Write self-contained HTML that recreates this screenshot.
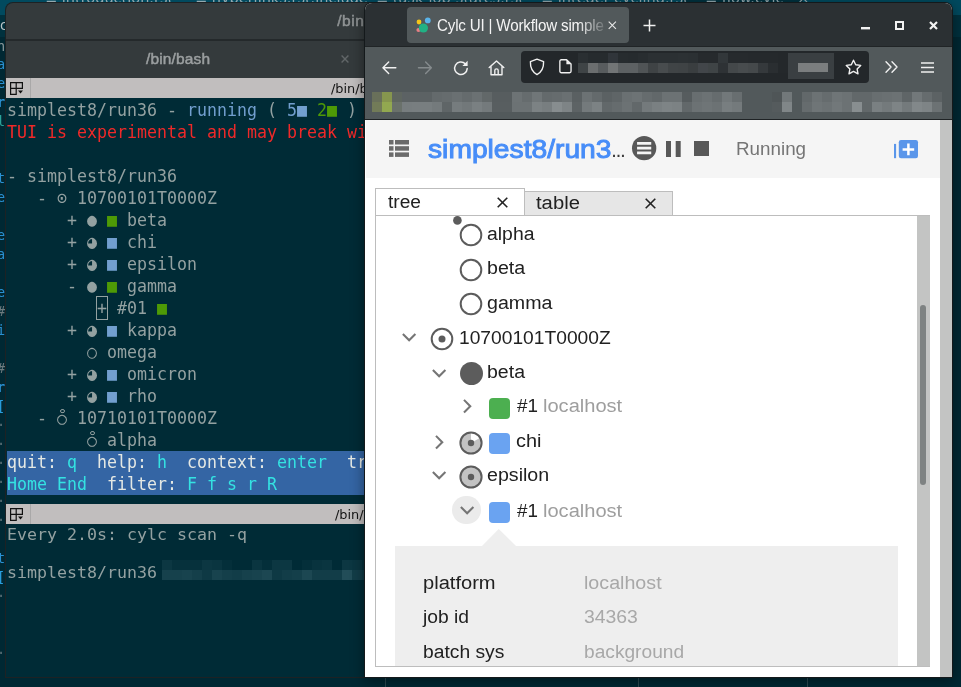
<!DOCTYPE html>
<html lang="en">
<head>
<meta charset="utf-8">
<title>Cylc UI | Workflow simplest8/run36</title>
<style>
html,body{margin:0;padding:0;}
body{width:961px;height:687px;overflow:hidden;position:relative;background:#00252f;font-family:"Liberation Sans","DejaVu Sans",sans-serif;}
.abs{position:absolute;}
#term,#ff,#desk{will-change:transform;}
/* ---------- desktop / editor behind ---------- */
#desk{left:0;top:0;width:961px;height:687px;background:#002b36;overflow:hidden;}
#desk .tabs{left:0;top:0;width:961px;height:15px;background:linear-gradient(90deg,#014a5f 0,#014a5f 100%);}
#desk .tabtxt{top:-10px;font:14.5px/16px "DejaVu Sans","Liberation Sans",sans-serif;color:#93a9b0;white-space:pre;}
#desk .gut{font:13.5px/18px "DejaVu Sans Mono","Liberation Mono",monospace;color:#2f8fd0;white-space:pre;}
/* ---------- terminal window ---------- */
#term{left:6px;top:3px;width:380px;height:674px;background:#002b36;border-radius:7px 0 0 0;overflow:hidden;box-shadow:0 0 0 1px #1d2224;}
#term .title{left:0;top:0;width:380px;height:36px;background:#343a3c;}
#term .sep{left:0;top:36px;width:380px;height:2px;background:#24292b;}
#term .tabbar{left:0;top:38px;width:380px;height:37px;background:#343a3c;}
.gtkb{font:15.5px/20px "Liberation Sans","DejaVu Sans",sans-serif;color:#8f9394;white-space:pre;letter-spacing:0.15px;-webkit-text-stroke:0.5px currentColor;}
.ttl{background:#c1bebe;height:20px;width:380px;left:0;}
.ttl .lbl{font:12.9px/20px "DejaVu Sans","Liberation Sans",sans-serif;color:#141414;white-space:pre;top:0.5px;}
.ttl .ico{left:0;top:0;width:24px;height:20px;border-right:1px solid #a9a8a8;}
.mono{font:16.61px/22px "DejaVu Sans Mono","Liberation Mono",monospace;color:#93a1a1;white-space:pre;left:1px;height:22px;}
.tall{transform:scaleY(1.09);transform-origin:0 16.9px;}
.b{color:#729fcf}.g{color:#4e9a06}.r{color:#ef2929}.c{color:#34e2e2}.w{color:#e4e8e4}
.ra{position:relative;display:inline-block;transform:scaleY(0.917);transform-origin:50% 18px;}
.ra::after{content:"";position:absolute;left:2.65px;top:0.5px;width:2.9px;height:2.9px;border:0.95px solid #93a1a1;border-radius:50%;}
.sq{display:inline-block;width:10px;height:10px;vertical-align:-1px;}

/* ---------- browser ---------- */
#ff{left:365px;top:3px;width:587px;height:674px;background:#fff;border-radius:7px 7px 0 0;overflow:hidden;box-shadow:0 0 0 1px #14191b,0 3px 14px 1px rgba(0,0,0,0.42);}
#ff .tabbar{left:0;top:0;width:587px;height:43px;background:#2b3033;}
#ff .line1{left:0;top:43px;width:587px;height:1px;background:#202426;}
#ff .tool{left:0;top:44px;width:587px;height:72px;background:#52595b;}
#ff .line2{left:0;top:116px;width:587px;height:1px;background:#1f2325;}
#ff .tab{left:42px;top:4px;width:221.5px;height:35.5px;border-radius:4px;background:#52595b;}
#ff .tabtitle{left:71.5px;top:11.3px;width:178px;height:22px;overflow:hidden;font:16.2px/22px "Liberation Sans","DejaVu Sans",sans-serif;color:#f4f4f4;white-space:pre;letter-spacing:-0.2px;transform:scaleX(0.937);transform-origin:0 50%;}
#ff .url{left:156px;top:48px;width:348px;height:32px;border-radius:4px;background:#23272a;}
svg{position:absolute;overflow:visible;}
.px{position:absolute;width:10px;height:10px;}
/* page */
#page{left:1px;top:117px;width:574px;height:557px;background:#fff;overflow:hidden;font-family:"Liberation Sans",sans-serif;}
#page .hdr{left:0;top:0;width:574px;height:58px;background:#f5f5f5;}
#page .wtitle{font:25.4px/36px "Liberation Sans",sans-serif;color:#478df8;white-space:pre;transform-origin:0 50%;-webkit-text-stroke:0.95px #478df8;}
#page .status{font:17.5px/24px "Liberation Sans",sans-serif;color:#757575;white-space:pre;transform-origin:0 50%;}
#vsb{left:575px;top:117px;width:12px;height:557px;background:#c3c4c3;}
.tabbtn{border:1px solid #bdbdbd;box-sizing:border-box;font:18px/26px "Liberation Sans",sans-serif;color:#222;white-space:pre;}
#panel{left:9px;top:95px;width:555px;height:452px;border:1px solid #bdbdbd;box-sizing:border-box;background:#fff;}
.t{position:absolute;font:18px/24px "Liberation Sans",sans-serif;color:#212121;white-space:pre;transform-origin:0 50%;}
.t.h{color:#9e9e9e;}
.t.v{color:#a8a8a8;}
.sqr{position:absolute;width:21px;height:21px;border-radius:4px;}
</style>
</head>
<body>
<div id="desk" class="abs">
  <div class="abs tabs"></div>
  <div class="abs" style="left:683px;top:0;width:120px;height:15px;background:#00323f;"></div>
  <div class="abs tabtxt" style="left:45px;">≡ introduction.rst</div>
  <div class="abs tabtxt" style="left:195px;">≡ hyperlinks.rst.include</div>
  <div class="abs tabtxt" style="left:376px;">≡ task-job-states.rst</div>
  <div class="abs tabtxt" style="left:541px;">≡ integer-cycling.rst</div>
  <div class="abs tabtxt" style="left:705px;">≡ flow.cylc   ×</div>
  <div class="abs" style="left:0;top:15px;width:961px;height:22px;background:#00313e;"></div>
  <div class="abs" style="left:0;top:37px;width:961px;height:650px;background:#002833;"></div>
  <div class="abs gut" style="left:-3px;top:54.5px;color:#2a8fd0">a</div>
  <div class="abs gut" style="left:-3px;top:73.5px;color:#2a8fd0">e</div>
  <div class="abs gut" style="left:-3px;top:92.5px;color:#2a8fd0;font-weight:bold">r</div>
  <div class="abs gut" style="left:-3px;top:111.5px;color:#2aa198">l</div>
  <div class="abs gut" style="left:-3px;top:168.5px;color:#2a8fd0">t</div>
  <div class="abs gut" style="left:-3px;top:187.5px;color:#2a8fd0">e</div>
  <div class="abs gut" style="left:-3px;top:225.5px;color:#2a8fd0">e</div>
  <div class="abs gut" style="left:-3px;top:244.5px;color:#2a8fd0">a</div>
  <div class="abs gut" style="left:-3px;top:282.5px;color:#2a8fd0">e</div>
  <div class="abs gut" style="left:-3px;top:301.5px;color:#6c7a7e">#</div>
  <div class="abs gut" style="left:-3px;top:320.5px;color:#2a8fd0">i</div>
  <div class="abs gut" style="left:-3px;top:358.5px;color:#6c7a7e">#</div>
  <div class="abs gut" style="left:-3px;top:377.5px;color:#2a8fd0;font-weight:bold">r</div>
  <div class="abs gut" style="left:-3px;top:396.5px;color:#2aa0e0">[</div>
  <div class="abs gut" style="left:-3px;top:415.5px;color:#586e75">·</div>
  <div class="abs gut" style="left:-3px;top:434.5px;color:#586e75">·</div>
  <div class="abs gut" style="left:-3px;top:453.5px;color:#586e75">·</div>
  <div class="abs gut" style="left:-3px;top:472.5px;color:#586e75">·</div>
  <div class="abs gut" style="left:-3px;top:491.5px;color:#586e75">·</div>
  <div class="abs gut" style="left:-3px;top:510.5px;color:#586e75">·</div>
  <div class="abs gut" style="left:-3px;top:548.5px;color:#2a8fd0">t</div>
  <div class="abs gut" style="left:-3px;top:567.5px;color:#2aa0e0">[</div>
  <div class="abs gut" style="left:-3px;top:586.5px;color:#586e75">·</div>
  <div class="abs gut" style="left:-3px;top:643.5px;color:#586e75">·</div>
  <div class="abs gut" style="left:-0.5px;top:15.5px;color:#b8c4c6;">c</div>
  <div class="abs gut" style="left:-3px;top:36.5px;color:#8a999c;">n</div>
  <div class="abs" style="left:385px;top:677px;width:1px;height:10px;background:#2c4a52;"></div>
  <div class="abs" style="left:638px;top:677px;width:1px;height:10px;background:#2c4a52;"></div>
  <div class="abs" style="left:807px;top:677px;width:1px;height:10px;background:#2c4a52;"></div>
</div>

<!-- ================= TERMINAL ================= -->
<div id="term" class="abs">
  <div class="abs title"></div>
  <div class="abs sep"></div>
  <div class="abs tabbar"></div>
  <div class="abs gtkb" style="left:331.3px;top:8px;letter-spacing:0.5px;">/bin/bash</div>
  <div class="abs gtkb" style="left:140px;top:46px;color:#9b9fa0;">/bin/bash</div>
  <svg style="left:335px;top:52px" width="8" height="8" viewBox="0 0 8 8"><path d="M0.6 0.6L7.4 7.4M7.4 0.6L0.6 7.4" stroke="#616668" stroke-width="1.4" fill="none"/></svg>
  <div class="px" style="left:156px;top:557px;background:rgb(12,55,66);"></div><div class="px" style="left:156px;top:567px;background:rgb(22,65,76);"></div><div class="px" style="left:166px;top:557px;background:rgb(6,49,60);"></div><div class="px" style="left:166px;top:567px;background:rgb(22,65,76);"></div><div class="px" style="left:176px;top:557px;background:rgb(6,49,60);"></div><div class="px" style="left:176px;top:567px;background:rgb(24,67,78);"></div><div class="px" style="left:186px;top:557px;background:rgb(6,49,60);"></div><div class="px" style="left:186px;top:567px;background:rgb(20,63,74);"></div><div class="px" style="left:196px;top:557px;background:rgb(12,55,66);"></div><div class="px" style="left:196px;top:567px;background:rgb(14,57,68);"></div><div class="px" style="left:206px;top:557px;background:rgb(10,53,64);"></div><div class="px" style="left:206px;top:567px;background:rgb(24,67,78);"></div><div class="px" style="left:216px;top:557px;background:rgb(4,47,58);"></div><div class="px" style="left:216px;top:567px;background:rgb(20,63,74);"></div><div class="px" style="left:226px;top:557px;background:rgb(0,43,54);"></div><div class="px" style="left:226px;top:567px;background:rgb(18,61,72);"></div><div class="px" style="left:236px;top:557px;background:rgb(0,43,54);"></div><div class="px" style="left:236px;top:567px;background:rgb(22,65,76);"></div><div class="px" style="left:246px;top:557px;background:rgb(10,53,64);"></div><div class="px" style="left:246px;top:567px;background:rgb(24,67,78);"></div><div class="px" style="left:256px;top:557px;background:rgb(4,47,58);"></div><div class="px" style="left:256px;top:567px;background:rgb(28,71,82);"></div><div class="px" style="left:266px;top:557px;background:rgb(12,55,66);"></div><div class="px" style="left:266px;top:567px;background:rgb(14,57,68);"></div><div class="px" style="left:276px;top:557px;background:rgb(12,55,66);"></div><div class="px" style="left:276px;top:567px;background:rgb(18,61,72);"></div><div class="px" style="left:286px;top:557px;background:rgb(0,43,54);"></div><div class="px" style="left:286px;top:567px;background:rgb(20,63,74);"></div><div class="px" style="left:296px;top:557px;background:rgb(4,47,58);"></div><div class="px" style="left:296px;top:567px;background:rgb(28,71,82);"></div><div class="px" style="left:306px;top:557px;background:rgb(8,51,62);"></div><div class="px" style="left:306px;top:567px;background:rgb(18,61,72);"></div><div class="px" style="left:316px;top:557px;background:rgb(10,53,64);"></div><div class="px" style="left:316px;top:567px;background:rgb(18,61,72);"></div><div class="px" style="left:326px;top:557px;background:rgb(0,43,54);"></div><div class="px" style="left:326px;top:567px;background:rgb(18,61,72);"></div><div class="px" style="left:336px;top:557px;background:rgb(12,55,66);"></div><div class="px" style="left:336px;top:567px;background:rgb(34,77,88);"></div><div class="px" style="left:346px;top:557px;background:rgb(10,53,64);"></div><div class="px" style="left:346px;top:567px;background:rgb(18,61,72);"></div><div class="px" style="left:356px;top:557px;background:rgb(4,47,58);"></div><div class="px" style="left:356px;top:567px;background:rgb(14,57,68);"></div>
  <div class="abs" style="left:90px;top:293px;width:12px;height:23.5px;box-sizing:border-box;border:1px solid #93a1a1;"></div>
  <div class="abs ttl" style="top:75px;"><div class="abs ico"><svg style="left:4px;top:4px" width="14" height="13" viewBox="0 0 14 13"><path d="M0.6 0.6H12.4V6.3H0.6ZM0.6 6.3V12.4H6.2V0.6" stroke="#111" stroke-width="1.2" fill="none"/><path d="M8 8.6H13L10.5 11.4Z" fill="#111"/></svg></div><div class="abs lbl" style="left:325px;">/bin/bash</div></div>
  <div class="abs ttl" style="top:501px;"><div class="abs ico"><svg style="left:4px;top:4px" width="14" height="13" viewBox="0 0 14 13"><path d="M0.6 0.6H12.4V6.3H0.6ZM0.6 6.3V12.4H6.2V0.6" stroke="#111" stroke-width="1.2" fill="none"/><path d="M8 8.6H13L10.5 11.4Z" fill="#111"/></svg></div><div class="abs lbl" style="left:329px;">/bin/bash</div></div>
  <div class="abs mono tall" style="top:97px;"><span>simplest8/run36 - </span><span class="b">running</span> ( <span class="b">5■</span> <span class="g">2■</span> )</div>
  <div class="abs mono tall" style="top:119px;"><span class="r">TUI is experimental and may break with</span></div>
  <div class="abs mono tall" style="top:163px;">- simplest8/run36</div>
  <div class="abs mono tall" style="top:185px;">   - ⊙ 10700101T0000Z</div>
  <div class="abs mono tall" style="top:207px;">      + ● <span class="g">■</span> beta</div>
  <div class="abs mono tall" style="top:229px;">      + ◕ <span class="b">■</span> chi</div>
  <div class="abs mono tall" style="top:251px;">      + ◕ <span class="b">■</span> epsilon</div>
  <div class="abs mono tall" style="top:273px;">      - ● <span class="g">■</span> gamma</div>
  <div class="abs mono tall" style="top:295px;">         <span class="cur">+</span> #01 <span class="g">■</span></div>
  <div class="abs mono tall" style="top:317px;">      + ◕ <span class="b">■</span> kappa</div>
  <div class="abs mono tall" style="top:339px;">        ○ omega</div>
  <div class="abs mono tall" style="top:361px;">      + ◕ <span class="b">■</span> omicron</div>
  <div class="abs mono tall" style="top:383px;">      + ◕ <span class="b">■</span> rho</div>
  <div class="abs mono tall" style="top:405px;">   - <span class="ra">○</span> 10710101T0000Z</div>
  <div class="abs mono tall" style="top:427px;">        <span class="ra">○</span> alpha</div>
  <div class="abs" style="left:1px;top:448px;width:378px;height:44px;background:#3465a4;"></div>
  <div class="abs mono tall w" style="top:449px;">quit: <span class="c">q</span>  help: <span class="c">h</span>  context: <span class="c">enter</span>  tree: </div>
  <div class="abs mono tall w" style="top:471px;"><span class="c">Home End</span>  filter: <span class="c">F f s r R</span></div>
  <div class="abs mono" style="top:522px;line-height:19.5px;">Every 2.0s: cylc scan -q</div>
  <div class="abs mono" style="top:560.3px;line-height:19.5px;">simplest8/run36</div>
</div>

<!-- ================= BROWSER ================= -->
<div id="ff" class="abs">
<div class="abs tabbar"></div><div class="abs line1"></div><div class="abs tool"></div><div class="abs line2"></div>
<div class="abs tab"></div>
<svg style="left:50px;top:12px" width="20" height="20" viewBox="0 0 20 20"><circle cx="4" cy="7" r="2.4" fill="#f5c518"/><circle cx="12.8" cy="5.4" r="2.9" fill="#5ab4ea"/><circle cx="3.5" cy="15" r="2.1" fill="#e87d84"/><circle cx="8.4" cy="13" r="4.6" fill="#21b184"/></svg>
<div class="abs tabtitle">Cylc UI | Workflow simplest8/run36</div>
<div class="abs" style="left:213px;top:8px;width:27px;height:28px;background:linear-gradient(90deg,rgba(82,89,91,0),rgba(82,89,91,0.85));"></div>
<svg style="left:242.5px;top:18px" width="8.6" height="8.6" viewBox="0 0 10 10"><path d="M0.8 0.8L9.2 9.2M9.2 0.8L0.8 9.2" stroke="#e8e8e8" stroke-width="1.3" fill="none"/></svg>
<svg style="left:278px;top:16px" width="13" height="13" viewBox="0 0 13 13"><path d="M6.5 0.5V12.5M0.5 6.5H12.5" stroke="#f0f0f0" stroke-width="1.5" fill="none"/></svg>
<svg style="left:496px;top:23.6px" width="9" height="3" viewBox="0 0 9 3"><rect x="0" y="0" width="9" height="2.4" fill="#f2f2f2"/></svg>
<svg style="left:530px;top:18px" width="9" height="9" viewBox="0 0 9 9"><rect x="1" y="1" width="7" height="7" stroke="#f2f2f2" stroke-width="2" fill="none"/></svg>
<svg style="left:564.3px;top:18px" width="9" height="9" viewBox="0 0 9 9"><path d="M1 1L8 8M8 1L1 8" stroke="#f2f2f2" stroke-width="2.2" fill="none"/></svg>
<svg style="left:17px;top:57.7px" width="14.3" height="13.4" viewBox="0 0 15 14"><path d="M14.5 7H1.2M7 1L1 7L7 13" stroke="#f0f0f0" stroke-width="1.5" fill="none" stroke-linecap="round" stroke-linejoin="round"/></svg>
<svg style="left:53.3px;top:57.7px" width="14.3" height="13.4" viewBox="0 0 15 14"><path d="M0.5 7H13.8M8 1L14 7L8 13" stroke="#858b8d" stroke-width="1.5" fill="none" stroke-linecap="round" stroke-linejoin="round"/></svg>
<svg style="left:88px;top:56.5px" width="16" height="16" viewBox="0 0 16 16"><path d="M14.2 8.6A6.3 6.3 0 1 1 12.3 3.7" stroke="#f0f0f0" stroke-width="1.5" fill="none" stroke-linecap="round"/><path d="M14.6 0.8V6H9.4Z" fill="#f0f0f0"/></svg>
<svg style="left:123px;top:56.5px" width="17" height="16" viewBox="0 0 17 16"><path d="M1.2 7.6L8.5 1L15.8 7.6M3 6.2V14.8H14V6.2M6.8 14.8V10.6a1.7 1.7 0 0 1 3.4 0V14.8" stroke="#f0f0f0" stroke-width="1.4" fill="none" stroke-linecap="round" stroke-linejoin="round"/></svg>
<div class="px" style="left:7px;top:89px;background:#69705a;"></div><div class="px" style="left:7px;top:99px;background:#727b58;"></div><div class="px" style="left:17px;top:89px;background:#86964e;"></div><div class="px" style="left:17px;top:99px;background:#92a850;"></div><div class="px" style="left:27px;top:89px;background:#5f6660;"></div><div class="px" style="left:27px;top:99px;background:#6a716b;"></div><div class="px" style="left:37px;top:89px;background:#5c6264;"></div><div class="px" style="left:37px;top:99px;background:#777d7f;"></div><div class="px" style="left:47px;top:89px;background:#5c6264;"></div><div class="px" style="left:47px;top:99px;background:#787e80;"></div><div class="px" style="left:57px;top:89px;background:#5c6264;"></div><div class="px" style="left:57px;top:99px;background:#787e80;"></div><div class="px" style="left:67px;top:89px;background:#646a6c;"></div><div class="px" style="left:67px;top:99px;background:#747a7c;"></div><div class="px" style="left:77px;top:89px;background:#666c6e;"></div><div class="px" style="left:77px;top:99px;background:#5f6567;"></div><div class="px" style="left:87px;top:89px;background:#6a7072;"></div><div class="px" style="left:87px;top:99px;background:#767c7e;"></div><div class="px" style="left:97px;top:89px;background:#656b6d;"></div><div class="px" style="left:97px;top:99px;background:#72787a;"></div><div class="px" style="left:107px;top:89px;background:#6b7173;"></div><div class="px" style="left:107px;top:99px;background:#7a8082;"></div><div class="px" style="left:117px;top:89px;background:#626869;"></div><div class="px" style="left:117px;top:99px;background:#747a7c;"></div><div class="px" style="left:127px;top:89px;background:#575d5f;"></div><div class="px" style="left:127px;top:99px;background:#585e60;"></div><div class="px" style="left:137px;top:89px;background:#575d5f;"></div><div class="px" style="left:137px;top:99px;background:#585e60;"></div><div class="px" style="left:147px;top:89px;background:#6d7375;"></div><div class="px" style="left:147px;top:99px;background:#6c7274;"></div><div class="px" style="left:157px;top:89px;background:#666c6e;"></div><div class="px" style="left:157px;top:99px;background:#6c7274;"></div><div class="px" style="left:167px;top:89px;background:#707678;"></div><div class="px" style="left:167px;top:99px;background:#7c8284;"></div><div class="px" style="left:177px;top:89px;background:#646a6c;"></div><div class="px" style="left:177px;top:99px;background:#787e80;"></div><div class="px" style="left:187px;top:89px;background:#666c6e;"></div><div class="px" style="left:187px;top:99px;background:#878d8f;"></div><div class="px" style="left:197px;top:89px;background:#6a7072;"></div><div class="px" style="left:197px;top:99px;background:#7e8486;"></div><div class="px" style="left:207px;top:89px;background:#5a6062;"></div><div class="px" style="left:207px;top:99px;background:#5d6365;"></div><div class="px" style="left:217px;top:89px;background:#6c7274;"></div><div class="px" style="left:217px;top:99px;background:#747a7c;"></div><div class="px" style="left:227px;top:89px;background:#646a6c;"></div><div class="px" style="left:227px;top:99px;background:#7c8284;"></div><div class="px" style="left:237px;top:89px;background:#5b6163;"></div><div class="px" style="left:237px;top:99px;background:#62686a;"></div><div class="px" style="left:247px;top:89px;background:#5f6567;"></div><div class="px" style="left:247px;top:99px;background:#666c6e;"></div><div class="px" style="left:257px;top:89px;background:#6a7072;"></div><div class="px" style="left:257px;top:99px;background:#6c7274;"></div><div class="px" style="left:267px;top:89px;background:#6d7375;"></div><div class="px" style="left:267px;top:99px;background:#62686a;"></div><div class="px" style="left:277px;top:89px;background:#666c6e;"></div><div class="px" style="left:277px;top:99px;background:#747a7c;"></div><div class="px" style="left:287px;top:89px;background:#62686a;"></div><div class="px" style="left:287px;top:99px;background:#7a8082;"></div><div class="px" style="left:297px;top:89px;background:#6c7274;"></div><div class="px" style="left:297px;top:99px;background:#7e8486;"></div><div class="px" style="left:307px;top:89px;background:#6c7274;"></div><div class="px" style="left:307px;top:99px;background:#7c8284;"></div><div class="px" style="left:317px;top:89px;background:#565c5e;"></div><div class="px" style="left:317px;top:99px;background:#62686a;"></div><div class="px" style="left:327px;top:89px;background:#686e70;"></div><div class="px" style="left:327px;top:99px;background:#6c7274;"></div><div class="px" style="left:337px;top:89px;background:#6c7274;"></div><div class="px" style="left:337px;top:99px;background:#6f7577;"></div><div class="px" style="left:347px;top:89px;background:#666c6e;"></div><div class="px" style="left:347px;top:99px;background:#6c7274;"></div><div class="px" style="left:357px;top:89px;background:#72787a;"></div><div class="px" style="left:357px;top:99px;background:#787e80;"></div><div class="px" style="left:367px;top:89px;background:#686e70;"></div><div class="px" style="left:367px;top:99px;background:#747a7c;"></div><div class="px" style="left:407px;top:89px;background:#4f5557;"></div><div class="px" style="left:407px;top:99px;background:#555b5d;"></div><div class="px" style="left:417px;top:89px;background:#72787a;"></div><div class="px" style="left:417px;top:99px;background:#808688;"></div><div class="px" style="left:437px;top:89px;background:#62686a;"></div><div class="px" style="left:437px;top:99px;background:#666c6e;"></div><div class="px" style="left:447px;top:89px;background:#6c7274;"></div><div class="px" style="left:447px;top:99px;background:#6f7577;"></div><div class="px" style="left:457px;top:89px;background:#666c6e;"></div><div class="px" style="left:457px;top:99px;background:#6c7274;"></div><div class="px" style="left:467px;top:89px;background:#6f7577;"></div><div class="px" style="left:467px;top:99px;background:#72787a;"></div><div class="px" style="left:477px;top:89px;background:#6c7274;"></div><div class="px" style="left:477px;top:99px;background:#6c7274;"></div><div class="px" style="left:487px;top:89px;background:#62686a;"></div><div class="px" style="left:487px;top:99px;background:#888e90;"></div><div class="px" style="left:497px;top:89px;background:#62686a;"></div><div class="px" style="left:497px;top:99px;background:#62686a;"></div><div class="px" style="left:507px;top:89px;background:#686e70;"></div><div class="px" style="left:507px;top:99px;background:#7a8082;"></div><div class="px" style="left:517px;top:89px;background:#6a7072;"></div><div class="px" style="left:517px;top:99px;background:#747a7c;"></div><div class="px" style="left:527px;top:89px;background:#6c7274;"></div><div class="px" style="left:527px;top:99px;background:#7e8486;"></div><div class="px" style="left:537px;top:89px;background:#5f6567;"></div><div class="px" style="left:537px;top:99px;background:#747a7c;"></div><div class="px" style="left:547px;top:89px;background:#72787a;"></div><div class="px" style="left:547px;top:99px;background:#82888a;"></div><div class="px" style="left:557px;top:89px;background:#666c6e;"></div><div class="px" style="left:557px;top:99px;background:#7e8486;"></div><div class="px" style="left:567px;top:89px;background:#5c6264;"></div><div class="px" style="left:567px;top:99px;background:#6c7274;"></div>
<div class="abs url"></div>
<svg style="left:164px;top:55px" width="16" height="18" viewBox="0 0 16 18"><path d="M8 1.2L14.6 3.6C14.8 9.5 12.6 14.2 8 16.6C3.4 14.2 1.2 9.5 1.4 3.6Z" stroke="#f0f0f0" stroke-width="1.4" fill="none" stroke-linejoin="round"/></svg>
<svg style="left:193.7px;top:56.3px" width="13" height="14.6" viewBox="0 0 13 15"><path d="M2.2 0.8H7.6L12.2 5.2V12.6a1.5 1.5 0 0 1-1.5 1.5H2.2a1.5 1.5 0 0 1-1.5-1.5V2.3a1.5 1.5 0 0 1 1.5-1.5Z" stroke="#f0f0f0" stroke-width="1.4" fill="none" stroke-linejoin="round"/><path d="M7.4 0.8V5.4H12.2Z" fill="#f0f0f0"/></svg>
<svg style="left:480px;top:56px" width="17" height="16" viewBox="0 0 17 16"><path d="M8.5 1.2L10.7 5.7L15.7 6.4L12.1 9.9L13 14.8L8.5 12.4L4 14.8L4.9 9.9L1.3 6.4L6.3 5.7Z" stroke="#f0f0f0" stroke-width="1.4" fill="none" stroke-linejoin="round"/></svg>
<svg style="left:520px;top:58px" width="13" height="12" viewBox="0 0 13 12"><path d="M1 0.8L6 6L1 11.2M7 0.8L12 6L7 11.2" stroke="#f0f0f0" stroke-width="1.4" fill="none" stroke-linecap="round" stroke-linejoin="round"/></svg>
<svg style="left:556.3px;top:59px" width="13" height="11" viewBox="0 0 13 11"><path d="M0 1H13M0 5.5H13M0 10H13" stroke="#f0f0f0" stroke-width="1.4" fill="none"/></svg>
<div class="px" style="left:213px;top:50px;background:#2a2f32;"></div><div class="px" style="left:213px;top:60px;background:#3f4446;"></div><div class="px" style="left:223px;top:50px;background:#262b2e;"></div><div class="px" style="left:223px;top:60px;background:#6b6e6f;"></div><div class="px" style="left:233px;top:50px;background:#262b2e;"></div><div class="px" style="left:233px;top:60px;background:#585c5e;"></div><div class="px" style="left:243px;top:50px;background:#30353a;"></div><div class="px" style="left:243px;top:60px;background:#727576;"></div><div class="px" style="left:253px;top:50px;background:#272c2f;"></div><div class="px" style="left:253px;top:60px;background:#5d6163;"></div><div class="px" style="left:263px;top:50px;background:#262b2e;"></div><div class="px" style="left:263px;top:60px;background:#5d6163;"></div><div class="px" style="left:273px;top:50px;background:#282d30;"></div><div class="px" style="left:273px;top:60px;background:#505456;"></div><div class="px" style="left:283px;top:50px;background:#2b3033;"></div><div class="px" style="left:283px;top:60px;background:#3f4345;"></div><div class="px" style="left:293px;top:50px;background:#2b3033;"></div><div class="px" style="left:293px;top:60px;background:#484c4e;"></div><div class="px" style="left:303px;top:50px;background:#2b3033;"></div><div class="px" style="left:303px;top:60px;background:#404446;"></div><div class="px" style="left:313px;top:50px;background:#2c3134;"></div><div class="px" style="left:313px;top:60px;background:#3f4345;"></div><div class="px" style="left:323px;top:50px;background:#2b3033;"></div><div class="px" style="left:323px;top:60px;background:#3a3e40;"></div><div class="px" style="left:333px;top:50px;background:#262a2d;"></div><div class="px" style="left:333px;top:60px;background:#42464a;"></div><div class="px" style="left:343px;top:50px;background:#262a2d;"></div><div class="px" style="left:343px;top:60px;background:#3f4446;"></div><div class="px" style="left:353px;top:50px;background:#32373a;"></div><div class="px" style="left:353px;top:60px;background:#2e3235;"></div><div class="px" style="left:363px;top:50px;background:#262a2d;"></div><div class="px" style="left:363px;top:60px;background:#44484a;"></div><div class="px" style="left:373px;top:50px;background:#262a2d;"></div><div class="px" style="left:373px;top:60px;background:#484c4e;"></div><div class="px" style="left:383px;top:50px;background:#25292c;"></div><div class="px" style="left:383px;top:60px;background:#45494b;"></div><div class="px" style="left:393px;top:50px;background:#25292c;"></div><div class="px" style="left:393px;top:60px;background:#35393c;"></div><div class="px" style="left:403px;top:50px;background:#25292c;"></div><div class="px" style="left:403px;top:60px;background:#2a2e31;"></div><div class="px" style="left:413px;top:50px;background:#24282b;"></div><div class="px" style="left:413px;top:60px;background:#24282b;"></div>
<div class="abs" style="left:423px;top:50px;width:46px;height:26px;background:#3a3f42;"></div><div class="abs" style="left:433px;top:60px;width:30px;height:9px;background:#7b7e7f;"></div>




<!--PAGE-START-->
<div id="page" class="abs">
<div class="abs hdr"></div>
<svg style="left:23px;top:20px" width="20" height="17" viewBox="0 0 20 17"><g fill="#6b6b6b"><rect x="0" y="0" width="4.5" height="4.5"/><rect x="6" y="0" width="14" height="4.5"/><rect x="0" y="6.2" width="4.5" height="4.5"/><rect x="6" y="6.2" width="14" height="4.5"/><rect x="0" y="12.4" width="4.5" height="4.5"/><rect x="6" y="12.4" width="14" height="4.5"/></g></svg>
<div class="abs wtitle" id="t_wtitle" style="left:62.2px;top:10.80px;transform:scaleX(1.1113);">simplest8/run3</div>
<div class="abs" style="left:245.6px;top:22.2px;font:bold 14px/20px 'Liberation Sans',sans-serif;color:#3c3c3c;">…</div>
<svg style="left:266.2px;top:16.2px" width="24.3" height="24.3" viewBox="0 0 24 24"><circle cx="12" cy="12" r="12" fill="#585858"/><path d="M5 7.3H19M5 12H19M5 16.7H19" stroke="#f5f5f5" stroke-width="2.6"/></svg>
<svg style="left:300px;top:20.7px" width="14.7" height="16" viewBox="0 0 14.7 16"><rect x="0" y="0" width="5" height="16" fill="#585858"/><rect x="9.7" y="0" width="5" height="16" fill="#585858"/></svg>
<svg style="left:328px;top:21px" width="15" height="15" viewBox="0 0 15 15"><rect width="15" height="15" fill="#585858"/></svg>
<div class="abs status" id="t_status" style="left:369.9px;top:16.84px;transform:scaleX(1.0751);">Running</div>
<svg style="left:528.4px;top:20.3px" width="24" height="18.2" viewBox="0 0 24 18.2"><rect x="0" y="3.9" width="2.1" height="14.3" fill="#5a96ea"/><rect x="4.8" y="0" width="19.2" height="18.2" rx="2.2" fill="#5a96ea"/><path d="M14.4 3.6V15.2M8.6 9.4H20.2" stroke="#fff" stroke-width="2.5"/></svg>
<div class="abs tabbtn" style="left:9px;top:68px;width:150px;height:28px;background:#fff;border-bottom:none;"></div>
<div class="abs tabbtn" style="left:158px;top:71px;width:149px;height:25px;background:#e6e6e6;"></div>
<svg style="left:131px;top:76.5px" width="11" height="11" viewBox="0 0 11 11"><path d="M0.7 0.7L10.3 10.3M10.3 0.7L0.7 10.3" stroke="#222" stroke-width="1.6" fill="none"/></svg>
<svg style="left:278.5px;top:77.5px" width="11" height="11" viewBox="0 0 11 11"><path d="M0.7 0.7L10.3 10.3M10.3 0.7L0.7 10.3" stroke="#222" stroke-width="1.6" fill="none"/></svg>
<div id="panel" class="abs"></div>
<div id="pin" class="abs" style="left:10px;top:96px;width:553px;height:450px;overflow:hidden;">
<svg style="left:77px;top:0px" width="9" height="9" viewBox="0 0 9 9"><circle cx="4.4" cy="4.4" r="4.3" fill="#5c5c5c"/></svg>
<svg style="left:83.4px;top:7.0px" width="24" height="24" viewBox="0 0 24 24"><circle cx="12" cy="12" r="10.3" fill="none" stroke="#5c5c5c" stroke-width="2"/></svg>
<svg style="left:83.4px;top:41.6px" width="24" height="24" viewBox="0 0 24 24"><circle cx="12" cy="12" r="10.3" fill="none" stroke="#5c5c5c" stroke-width="2"/></svg>
<svg style="left:83.4px;top:76.2px" width="24" height="24" viewBox="0 0 24 24"><circle cx="12" cy="12" r="10.3" fill="none" stroke="#5c5c5c" stroke-width="2"/></svg>
<svg style="left:26.35px;top:117.2px" width="14.3" height="8.8" viewBox="0 0 13 8"><path d="M0.8 0.9L6.5 6.6L12.2 0.9" stroke="#757575" stroke-width="1.9" fill="none"/></svg>
<svg style="left:54.2px;top:111.4px" width="24" height="24" viewBox="0 0 24 24"><circle cx="12" cy="12" r="3.5" fill="#5c5c5c"/><circle cx="12" cy="12" r="10.3" fill="none" stroke="#5c5c5c" stroke-width="2"/></svg>
<svg style="left:55.6px;top:152.7px" width="14.3" height="8.8" viewBox="0 0 13 8"><path d="M0.8 0.9L6.5 6.6L12.2 0.9" stroke="#757575" stroke-width="1.9" fill="none"/></svg>
<svg style="left:84.0px;top:145.9px" width="23" height="23" viewBox="0 0 23 23"><circle cx="11.5" cy="11.5" r="11.5" fill="#5c5c5c"/></svg>
<svg style="left:86.6px;top:183.15px" width="8.8" height="14.3" viewBox="0 0 8 13"><path d="M0.9 0.8L6.6 6.5L0.9 12.2" stroke="#757575" stroke-width="1.9" fill="none"/></svg>
<div class="sqr" style="left:113.2px;top:182.2px;background:#4caf50"></div>
<svg style="left:58.6px;top:218.65px" width="8.8" height="14.3" viewBox="0 0 8 13"><path d="M0.9 0.8L6.6 6.5L0.9 12.2" stroke="#757575" stroke-width="1.9" fill="none"/></svg>
<svg style="left:83.3px;top:215.2px" width="24" height="24" viewBox="0 0 24 24"><circle cx="12" cy="12" r="10.6" fill="#c3c3c3"/><path d="M12 12L12 1.4A10.6 10.6 0 0 1 21.2 6.7Z" fill="#fff"/><circle cx="12" cy="12" r="3.2" fill="#5c5c5c"/><circle cx="12" cy="12" r="10.6" fill="none" stroke="#5c5c5c" stroke-width="2"/></svg>
<div class="sqr" style="left:113.2px;top:217px;background:#6aa3f1"></div>
<svg style="left:55.6px;top:254.6px" width="14.3" height="8.8" viewBox="0 0 13 8"><path d="M0.8 0.9L6.5 6.6L12.2 0.9" stroke="#757575" stroke-width="1.9" fill="none"/></svg>
<svg style="left:83.3px;top:249.2px" width="24" height="24" viewBox="0 0 24 24"><circle cx="12" cy="12" r="10.6" fill="#c3c3c3"/><circle cx="12" cy="12" r="3.2" fill="#5c5c5c"/><circle cx="12" cy="12" r="10.6" fill="none" stroke="#5c5c5c" stroke-width="2"/></svg>
<div class="abs" style="left:76.35px;top:279.6px;width:28.8px;height:28.8px;border-radius:50%;background:#ebebeb"></div>
<svg style="left:83.6px;top:289.9px" width="14.3" height="8.8" viewBox="0 0 13 8"><path d="M0.8 0.9L6.5 6.6L12.2 0.9" stroke="#757575" stroke-width="1.9" fill="none"/></svg>
<div class="sqr" style="left:113.2px;top:286px;background:#6aa3f1"></div>
<svg style="left:105px;top:312.5px" width="36" height="18" viewBox="0 0 36 18"><path d="M0 18L17.75 0L36 18Z" fill="#eeeeee"/></svg>
<div class="abs" style="left:19px;top:330px;width:502.7px;height:140px;background:#eeeeee"></div>
</div>
<div class="t " id="t_tree" style="left:21.80px;top:69.96px;font-size:18px;transform:scaleX(1.0634);">tree</div>
<div class="t " id="t_table" style="left:170.40px;top:70.96px;font-size:18px;transform:scaleX(1.1243);">table</div>
<div class="t " id="t_alpha" style="left:121.10px;top:101.76px;font-size:18px;transform:scaleX(1.0773);">alpha</div>
<div class="t " id="t_beta0" style="left:121.10px;top:136.36px;font-size:18px;transform:scaleX(1.0900);">beta</div>
<div class="t " id="t_gamma" style="left:121.10px;top:170.96px;font-size:18px;transform:scaleX(1.0903);">gamma</div>
<div class="t " id="t_cycle" style="left:93.30px;top:205.86px;font-size:18px;transform:scaleX(1.0674);">10700101T0000Z</div>
<div class="t " id="t_beta" style="left:121.30px;top:240.16px;font-size:18px;transform:scaleX(1.0843);">beta</div>
<div class="t " id="t_j1" style="left:150.60px;top:274.46px;font-size:18px;transform:scaleX(1.0459);">#1</div>
<div class="t h" id="t_lh1" style="left:177.35px;top:274.46px;font-size:18px;transform:scaleX(1.1148);">localhost</div>
<div class="t " id="t_chi" style="left:149.85px;top:309.36px;font-size:18px;transform:scaleX(1.1058);">chi</div>
<div class="t " id="t_epsilon" style="left:121.35px;top:343.46px;font-size:18px;transform:scaleX(1.0903);">epsilon</div>
<div class="t " id="t_j2" style="left:150.60px;top:378.56px;font-size:18px;transform:scaleX(1.0459);">#1</div>
<div class="t h" id="t_lh2" style="left:177.35px;top:378.56px;font-size:18px;transform:scaleX(1.1148);">localhost</div>
<div class="t " id="t_platform" style="left:57.10px;top:450.96px;font-size:18px;transform:scaleX(1.1164);">platform</div>
<div class="t " id="t_jobid" style="left:57.10px;top:484.96px;font-size:18px;transform:scaleX(1.0713);">job id</div>
<div class="t " id="t_batch" style="left:57.10px;top:519.71px;font-size:18px;transform:scaleX(1.0704);">batch sys</div>
<div class="t v" id="t_v1" style="left:217.90px;top:450.96px;font-size:18px;transform:scaleX(1.0922);">localhost</div>
<div class="t v" id="t_v2" style="left:217.90px;top:484.96px;font-size:18px;transform:scaleX(1.0767);">34363</div>
<div class="t v" id="t_v3" style="left:217.90px;top:519.71px;font-size:18px;transform:scaleX(1.0640);">background</div>
<div class="abs" style="left:551px;top:96px;width:13px;height:450px;background:#c3c4c3"></div>
<div class="abs" style="left:554.2px;top:184.7px;width:5.8px;height:180px;border-radius:3px;background:#7e8282"></div>
<div class="abs" style="left:0;top:546px;width:574px;height:11px;background:#fff"></div>
<div class="abs" style="left:9px;top:546px;width:555px;height:1px;background:#bdbdbd"></div>
</div>
<!--PAGE-END-->
<div id="vsb" class="abs"></div>
</div>
</body>
</html>
